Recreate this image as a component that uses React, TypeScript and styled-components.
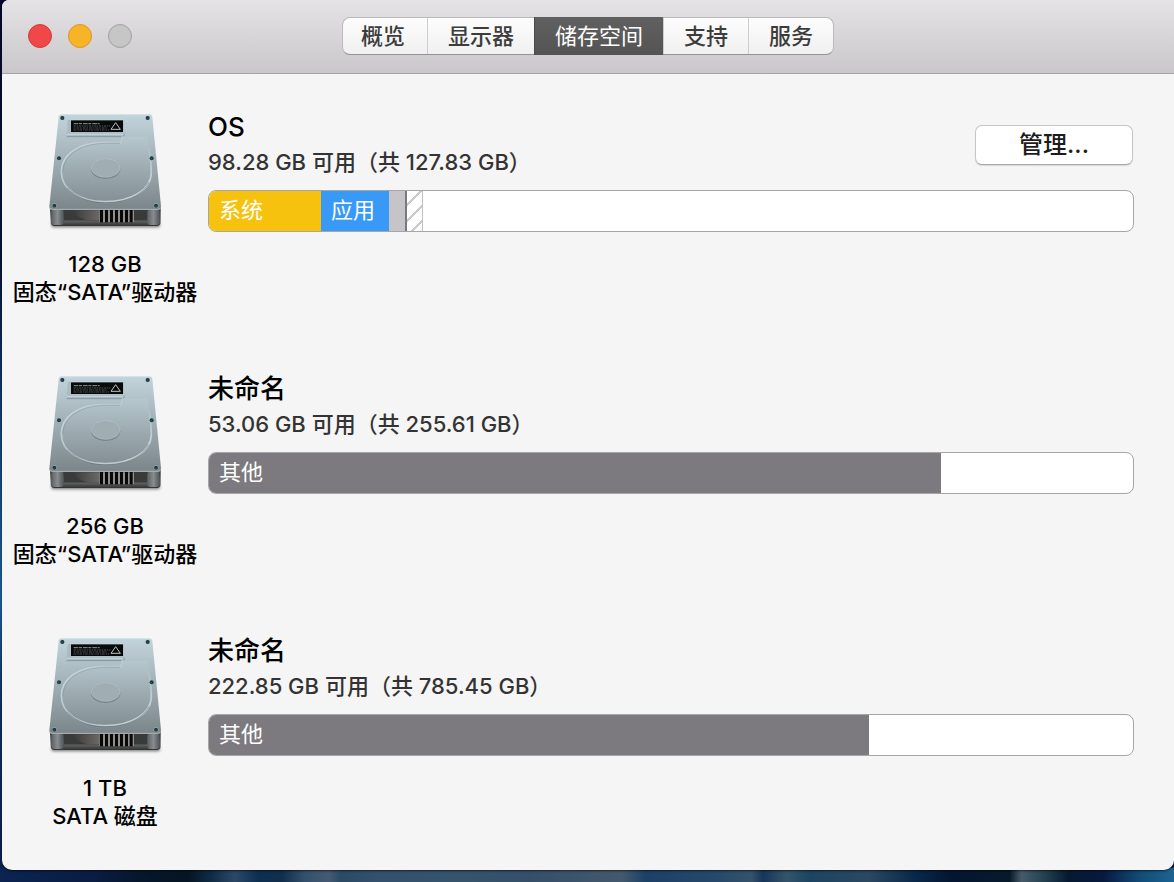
import React, { useState } from "react";
import styled, { createGlobalStyle, css } from "styled-components";

const GlobalStyle = createGlobalStyle`
  * { box-sizing: border-box; }
  body {
    margin: 0;
    font-family: Inter, "Noto Sans CJK SC", sans-serif;
    color: #000;
  }
`;

const Desktop = styled.div`
  display: flex;
  min-height: 100vh;
  padding: 0 0 12px 2px;
  background:
    linear-gradient(90deg, #0b2450 0%, #0a1d42 8%, #06162c 12%, #061522 16%, #0f2c46 18%, #2c4867 20%, #0d2f50 22%,
      #0f2f4c 24%, #34506d 26%, #465a72 28%, #2a4a64 29%, #33506c 32%, #35546c 39%, #354f69 45%, #43596c 53%,
      #1c4166 55%, #26486a 61%, #34526a 64%, #16365a 65%, #34546a 67%, #1c4462 69%, #2b4860 74%, #082849 78%,
      #041630 81%, #071a2b 86%, #465b69 87%, #23404f 89%, #051a31 91%, #08193f 94%, #124a76 97%, #1b6593 100%)
      bottom / 100% 14px no-repeat,
    linear-gradient(#06082c 0%, #07153c 30%, #123e70 48%, #1c5d96 68%, #0e2f5e 80%, #0a1f4b 100%);
`;

const Window = styled.main`
  flex: 1;
  display: flex;
  flex-direction: column;
  overflow: hidden;
  border-radius: 7px 0 10px 10px;
  background: #f5f5f5;
  box-shadow: 0 1px 2px rgba(0, 0, 0, 0.6);
`;

const TitleBar = styled.header`
  display: grid;
  grid-template-columns: 1fr auto 1fr;
  align-items: center;
  height: 74px;
  padding: 0 26px 2px;
  border-bottom: 1px solid #a5a3a6;
  background: linear-gradient(#e5e3e6, #c9c7ca);
`;

const WindowControls = styled.div`
  display: flex;
  gap: 16px;
`;

const WindowControl = styled.button<{ $fill: string; $edge: string }>`
  width: 24px;
  height: 24px;
  padding: 0;
  border: 1px solid ${(p) => p.$edge};
  border-radius: 50%;
  background: ${(p) => p.$fill};
`;

const TabGroup = styled.nav`
  display: flex;
  height: 38px;
  border: 1px solid #bbb9bc;
  border-bottom-color: #949295;
  border-radius: 8px;
  background: linear-gradient(#fdfdfd, #f0f0f0);
`;

const Tab = styled.button<{ $active: boolean }>`
  height: 36px;
  padding: 0 20px;
  border: 0;
  background: none;
  font: 500 22px/34px Inter, "Noto Sans CJK SC", sans-serif;
  color: #3c3c3c;

  &:first-child { padding: 0 22px 0 18px; }
  & + & { border-left: 1px solid #cfcdd0; }

  ${(p) =>
    p.$active &&
    css`
      height: 38px;
      margin-top: -1px;
      background: linear-gradient(#606060, #545454);
      color: #fff;
      font-weight: 400;
      line-height: 36px;
      && { border-left-color: #4a4a4a; }
      & + button { border-left-color: #4a4a4a; }
    `}
`;

const DriveList = styled.ul`
  display: flex;
  flex-direction: column;
  gap: 56px;
  margin: 0;
  padding: 26px 40px 36px 0;
  list-style: none;
`;

const DriveRow = styled.li`
  display: grid;
  grid-template-columns: 206px 1fr;
`;

const DriveSummary = styled.div`
  display: flex;
  flex-direction: column;
  align-items: center;
  gap: 10px;
`;

const DriveLabel = styled.p`
  margin: 0;
  font-size: 22px;
  font-weight: 500;
  line-height: 28px;
  text-align: center;
  white-space: pre-line;
`;

const DriveDetails = styled.div`
  display: flex;
  flex-direction: column;
  gap: 10px;
  padding-top: 10px;
`;

const DetailsHeader = styled.div`
  display: flex;
  align-items: center;
  justify-content: space-between;
  padding-right: 1px;
`;

const VolumeName = styled.h2`
  margin: 0;
  font-size: 26px;
  font-weight: 500;
  line-height: 34px;
`;

const Capacity = styled.p`
  margin: 0;
  font-size: 22px;
  font-weight: 500;
  line-height: 36px;
  color: #333;
`;

const ManageButton = styled.button`
  width: 158px;
  height: 40px;
  padding: 0;
  border: 1px solid #c6c6c6;
  border-bottom-color: #a9a9a9;
  border-radius: 7px;
  background: #fff;
  box-shadow: 0 1px 1px rgba(0, 0, 0, 0.12);
  font: 500 24px/38px Inter, "Noto Sans CJK SC", sans-serif;
  color: #1c1c1c;
`;

const UsageBar = styled.div`
  display: flex;
  height: 42px;
  overflow: hidden;
  border: 1px solid #a6a6a6;
  border-radius: 8px;
  background: #fff;
`;

type Kind = "system" | "apps" | "misc" | "purgeable" | "other";

const segmentStyles = {
  system: css`background: #f6c20d;`,
  apps: css`background: #389af6;`,
  misc: css`background: #c5c4c8; border-right: 2px solid #79787d;`,
  purgeable: css`
    border-right: 1px solid #c0c0c0;
    background: repeating-linear-gradient(135deg, #fff 0 9px, #c9c9c9 9px 11px);
  `,
  other: css`background: #7c7a7f;`,
};

const Segment = styled.div<{ $kind: Kind }>`
  flex: none;
  padding-left: 10px;
  overflow: hidden;
  font-size: 22px;
  font-weight: 400;
  line-height: 38px;
  white-space: nowrap;
  color: #fff;
  ${(p) => segmentStyles[p.$kind]}
`;

const DriveArt = styled.svg`
  display: block;
  width: 130px;
  height: 140px;
`;

const screws = [[67, 54], [323, 54], [57, 175], [335, 175], [43, 317], [348, 317]];
const vents = [184, 199, 214, 229, 244, 259, 273];

function HardDrive({ id }: { id: string }) {
  const ref = (name: string) => `url(#${id}-${name})`;
  return (
    <DriveArt viewBox="0 0 390 420" aria-hidden="true">
      <defs>
        <linearGradient id={`${id}-top`} x1="0" y1="0" x2="0" y2="1">
          <stop offset="0" stopColor="#c2d4dc" />
          <stop offset="0.45" stopColor="#a3b2b8" />
          <stop offset="1" stopColor="#7b8589" />
        </linearGradient>
        <linearGradient id={`${id}-well`} x1="0" y1="0" x2="0" y2="1">
          <stop offset="0" stopColor="#b6c7ce" />
          <stop offset="0.5" stopColor="#9dabb1" />
          <stop offset="1" stopColor="#848f94" />
        </linearGradient>
        <linearGradient id={`${id}-rim`} x1="0" y1="0" x2="1" y2="1">
          <stop offset="0" stopColor="#c9d9e0" />
          <stop offset="0.6" stopColor="#b3c1c7" />
          <stop offset="1" stopColor="#d3dde1" />
        </linearGradient>
        <linearGradient id={`${id}-front`} x1="0" y1="0" x2="0" y2="1">
          <stop offset="0" stopColor="#303232" />
          <stop offset="0.75" stopColor="#5a5c5c" />
          <stop offset="1" stopColor="#303030" />
        </linearGradient>
        <linearGradient id={`${id}-cavity`} x1="0" y1="0" x2="1" y2="0">
          <stop offset="0" stopColor="#3a3a3a" />
          <stop offset="1" stopColor="#6c6866" />
        </linearGradient>
        <linearGradient id={`${id}-post`} x1="0" y1="0" x2="1" y2="0">
          <stop offset="0" stopColor="#5c6062" />
          <stop offset="0.5" stopColor="#888c8e" />
          <stop offset="1" stopColor="#505456" />
        </linearGradient>
        <filter id={`${id}-soft`} x="-10%" y="-100%" width="120%" height="300%">
          <feGaussianBlur stdDeviation="4" />
        </filter>
      </defs>
      <rect x="34" y="368" width="326" height="14" rx="6" fill="#000" opacity="0.5" filter={ref("soft")} />
      <path d="M30 324H362V366Q362 378 350 378H44Q32 378 32 366Z" fill={ref("front")} />
      <path d="M72 329H322V361H72Z" fill="#393b3b" />
      <path d="M98 331H178V361H142Q110 354 98 331Z" fill={ref("cavity")} />
      <path d="M178 331H282V366H178Z" fill="#918e8b" />
      {vents.map((x) => (
        <rect key={x} x={x - 4} y="330" width="9" height="37" fill="#090909" />
      ))}
      <rect x="34" y="328" width="37" height="47" rx="9" fill={ref("post")} />
      <rect x="322" y="328" width="37" height="47" rx="9" fill={ref("post")} />
      <path d="M66 43H327Q336 43 337 51L363 318Q364 330 353 330H37Q27 330 28 319L56 51Q57 43 66 43Z" fill={ref("top")} />
      <path d="M29 323Q31 328 38 328H353Q361 328 362 323" fill="none" stroke="#c3cdd1" strokeWidth="2" />
      <path d="M65 44H328" stroke="#d9e7ed" strokeWidth="2" />
      <path d="M83 60H92V100H251V110H80Z" fill="#a9bbc3" />
      <path d="M80 110H250L254 101" fill="none" stroke="#71858e" strokeWidth="2" />
      <path d="M81 103H250" stroke="#c8d7dd" strokeWidth="3" />
      <rect x="92" y="60" width="158" height="37" fill="#080a0b" stroke="#d0dadd" strokeWidth="2" />
      <g stroke="#8e979a" strokeWidth="2" fill="none">
        <path d="M101 71H179" strokeWidth="3" strokeDasharray="14 2 9 3" />
        <path d="M101 78H211" stroke="#6e7679" strokeDasharray="7 2 4 2" />
        <path d="M101 84H200" stroke="#6e7679" strokeDasharray="5 3 9 2" />
        <path d="M101 90H207" stroke="#6e7679" strokeDasharray="8 3 4 2" />
        <path d="M227 68L241 88H213Z" stroke="#b9c2c4" strokeWidth="3" strokeLinejoin="round" />
      </g>
      <path
        d="M247 110L243 128H199C114 126 64 164 64 216C64 270 121 303 194 305C272 306 334 271 334 216C334 178 330 140 322 110Z"
        fill={ref("well")}
      />
      <path
        d="M247 110L243 128H199C114 126 64 164 64 216C64 270 121 303 194 305C272 306 334 271 334 216C334 192 331 168 327 146"
        fill="none" stroke={ref("rim")} strokeWidth="5" strokeLinecap="round"
      />
      <path d="M81 264C115 297 154 308 194 308C261 308 308 284 327 247" fill="none" stroke="#58646a" strokeWidth="2" opacity="0.65" />
      <path d="M240 130H199C120 130 69 165 69 216" fill="none" stroke="#7a8d96" strokeWidth="2" opacity="0.7" />
      <ellipse cx="197" cy="208" rx="44" ry="29" fill="#69777e" opacity="0.7" />
      <ellipse cx="197" cy="204" rx="43" ry="28" fill="#a0adb2" stroke="#b4c0c5" strokeWidth="2" />
      {screws.map(([x, y]) => (
        <g key={`${x}-${y}`}>
          <circle cx={x} cy={y} r="7" fill="#a7babf" />
          <circle cx={x} cy={y} r="6" fill="#1c383f" />
          <path d={`M${x - 3} ${y + 1}H${x + 2}`} stroke="#45666e" strokeWidth="2" />
        </g>
      ))}
    </DriveArt>
  );
}

interface Drive {
  id: string;
  label: string;
  name: string;
  capacity: string;
  manageable?: boolean;
  segments: { kind: Kind; percent: number; text?: string }[];
}

const drives: Drive[] = [
  {
    id: "os",
    label: "128 GB\n固态“SATA”驱动器",
    name: "OS",
    capacity: "98.28 GB 可用（共 127.83 GB）",
    manageable: true,
    segments: [
      { kind: "system", percent: 12.12, text: "系统" },
      { kind: "apps", percent: 7.36, text: "应用" },
      { kind: "misc", percent: 1.95 },
      { kind: "purgeable", percent: 1.73 },
    ],
  },
  {
    id: "ssd",
    label: "256 GB\n固态“SATA”驱动器",
    name: "未命名",
    capacity: "53.06 GB 可用（共 255.61 GB）",
    segments: [{ kind: "other", percent: 79.24, text: "其他" }],
  },
  {
    id: "hdd",
    label: "1 TB\nSATA 磁盘",
    name: "未命名",
    capacity: "222.85 GB 可用（共 785.45 GB）",
    segments: [{ kind: "other", percent: 71.43, text: "其他" }],
  },
];

const tabs = ["概览", "显示器", "储存空间", "支持", "服务"];

export default function App() {
  const [active, setActive] = useState("储存空间");
  return (
    <>
      <GlobalStyle />
      <Desktop lang="zh-CN">
        <Window>
          <TitleBar>
            <WindowControls>
              <WindowControl aria-label="关闭" $fill="#f04848" $edge="#d63a3c" />
              <WindowControl aria-label="最小化" $fill="#f6b426" $edge="#d9952a" />
              <WindowControl aria-label="缩放" $fill="#c6c6c6" $edge="#a0a0a0" disabled />
            </WindowControls>
            <TabGroup>
              {tabs.map((tab) => (
                <Tab key={tab} $active={tab === active} aria-pressed={tab === active} onClick={() => setActive(tab)}>
                  {tab}
                </Tab>
              ))}
            </TabGroup>
          </TitleBar>
          <DriveList>
            {drives.map((drive) => (
              <DriveRow key={drive.id}>
                <DriveSummary>
                  <HardDrive id={drive.id} />
                  <DriveLabel>{drive.label}</DriveLabel>
                </DriveSummary>
                <DriveDetails>
                  <DetailsHeader>
                    <div>
                      <VolumeName>{drive.name}</VolumeName>
                      <Capacity>{drive.capacity}</Capacity>
                    </div>
                    {drive.manageable && <ManageButton>管理...</ManageButton>}
                  </DetailsHeader>
                  <UsageBar>
                    {drive.segments.map((segment) => (
                      <Segment key={segment.kind} $kind={segment.kind} style={{ width: `${segment.percent}%` }}>
                        {segment.text}
                      </Segment>
                    ))}
                  </UsageBar>
                </DriveDetails>
              </DriveRow>
            ))}
          </DriveList>
        </Window>
      </Desktop>
    </>
  );
}
